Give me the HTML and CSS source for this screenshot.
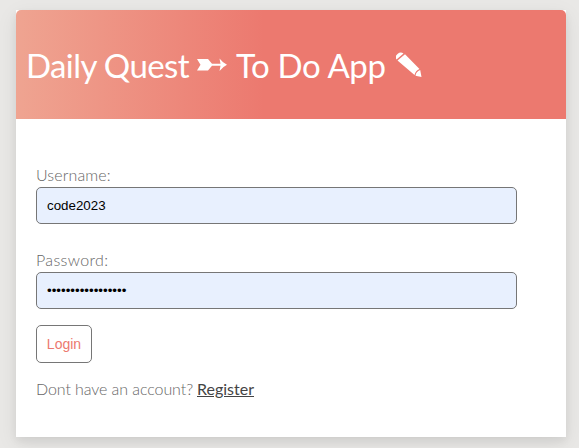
FILE: index.html
```html
<!DOCTYPE html>
<html lang="en">
<head>
<meta charset="utf-8">
<title>Daily Quest</title>
<link rel="stylesheet" href="styles.css">
</head>
<body>
<main class="card">
  <header class="header">
    <h1 class="title">
      <span class="name">Daily Quest</span>
      <svg class="arrow" width="30" height="16" viewBox="0 0 30 16" aria-hidden="true"><path fill="#fff" d="M0 2H11L15 6.700H23.500L22.500 1.500Q25.500 5.500 30 7.700Q25.500 9.900 22.500 14L23.500 8.700H15L11 13.400H0L3.500 7.700Z"/></svg>
      <span class="app">To Do App</span>
      <svg class="pencil" width="27" height="26" viewBox="0 0 27 26" aria-hidden="true"><path fill="#fff" d="M.5 7.500Q-1.500 4.500 1.500 2Q4.500-.5 7.500 1.500ZM9 2.300L23.500 17Q19.500 18.500 18.500 23L1.500 8.500ZM24.200 18L25.500 25L19.500 23.800Q20 19.500 24.200 18Z"/></svg>
    </h1>
  </header>
  <form class="form">
    <label class="label user" for="username">Username:</label>
    <input class="input" id="username" type="text" value="code2023">
    <label class="label pass" for="password">Password:</label>
    <input class="input" id="password" type="password" value="aaaaaaaaaaaaaaaaa">
    <button class="login" type="button">Login</button>
    <p class="signup"><span class="question">Dont have an account?</span> <a class="register" href="#">Register</a></p>
  </form>
</main>
</body>
</html>
```
FILE: styles.css
```css
* { box-sizing: border-box; }
body {
  margin: 0;
  padding: 10px 13px 11px 16px;
  height: 448px;
  overflow: hidden;
  background: #e9e8e6;
  color: #666;
  font: 300 16px/20px Lato, "Open Sans", sans-serif;
}
.card {
  height: 427px;
  background: #fff;
  box-shadow: 0 4px 8px rgba(0,0,0,.06), 0 6px 20px rgba(0,0,0,.08);
}
.header {
  height: 109px;
  padding: 0 10px;
  border-radius: 5px 5px 0 0;
  background: linear-gradient(to right, #efa491 0, #ec796f 45%);
  color: #fff;
  display: flex;
  align-items: center;
}
.title {
  margin: 1px 0 0;
  display: flex;
  align-items: center;
  font: 400 33px/44px Lato, sans-serif;
  white-space: nowrap;
}
.name { width: 171px; letter-spacing: -.6px; }
.app { width: 160px; margin-left: 9px; letter-spacing: -.35px; }
.form {
  padding: 46px 49px 0 20px;
  display: flex;
  flex-direction: column;
  align-items: flex-start;
}
.label { height: 22px; }
.user { letter-spacing: .12px; }
.pass { margin-top: 26px; letter-spacing: .35px; }
.input {
  width: 481px;
  height: 37px;
  padding: 0 10px;
  border: 1px solid #767676;
  border-radius: 5px;
  background: #e8f0fe;
  color: #000;
  font: 13.333px "Liberation Sans", Arial, sans-serif;
}
.login {
  width: 56px;
  height: 38px;
  margin-top: 16px;
  padding: 0;
  border: 1px solid #767676;
  border-radius: 5px;
  background: #fff;
  color: #ec796f;
  font: 14px "Liberation Sans", Arial, sans-serif;
}
.signup { margin: 16px 0 0; display: flex; }
.question { width: 161px; white-space: nowrap; letter-spacing: -.08px; }
.register { color: #444; font-weight: 400; text-decoration: underline; }
```
